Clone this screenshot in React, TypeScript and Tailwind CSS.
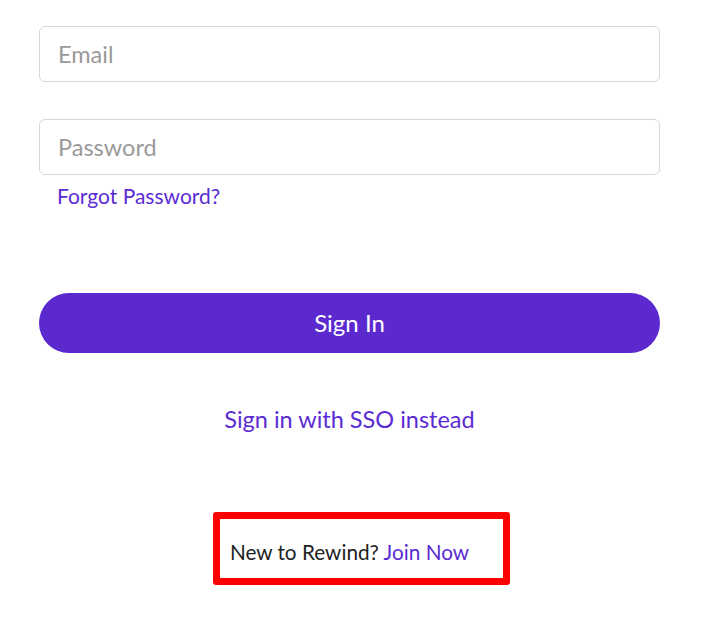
export default function App() {
  return (
    <div className="min-h-screen bg-white font-['Lato','Noto_Sans',sans-serif]">
      <div className="w-[621px] ml-[39px] pt-[26px] flex flex-col">
        <input
          type="email"
          placeholder="Email"
          className="h-[56px] w-full rounded-[6px] border border-[#d6d6d6] px-[18px] text-[23.5px] text-[#333] placeholder:text-[#9a9a9a] outline-none"
        />
        <input
          type="password"
          placeholder="Password"
          className="mt-[37px] h-[56px] w-full rounded-[6px] border border-[#d6d6d6] px-[18px] text-[23.5px] text-[#333] placeholder:text-[#9a9a9a] outline-none"
        />
        <a href="#" className="mt-[7px] ml-[18px] self-start text-[21px] leading-[28px] text-[#5b2bd3]">
          Forgot Password?
        </a>

        <button className="mt-[83px] h-[60px] w-full rounded-full bg-[#5c29cf] text-[24px] text-white">
          Sign In
        </button>

        <a href="#" className="mt-[51px] self-center text-[23.5px] leading-[30px] text-[#5b2bd3]">
          Sign in with SSO instead
        </a>

        <div className="mt-[78px] ml-[24px] self-center">
          <div className="rounded-[3px] border-[7px] border-[#ff0000] pl-[10px] pr-[34px] pt-[21px] pb-[14px]">
            <p className="text-[20.75px] leading-[24px] text-[#222]">
              New to Rewind? <a href="#" className="text-[#5b2bd3]">Join Now</a>
            </p>
          </div>
        </div>
      </div>
    </div>
  );
}
